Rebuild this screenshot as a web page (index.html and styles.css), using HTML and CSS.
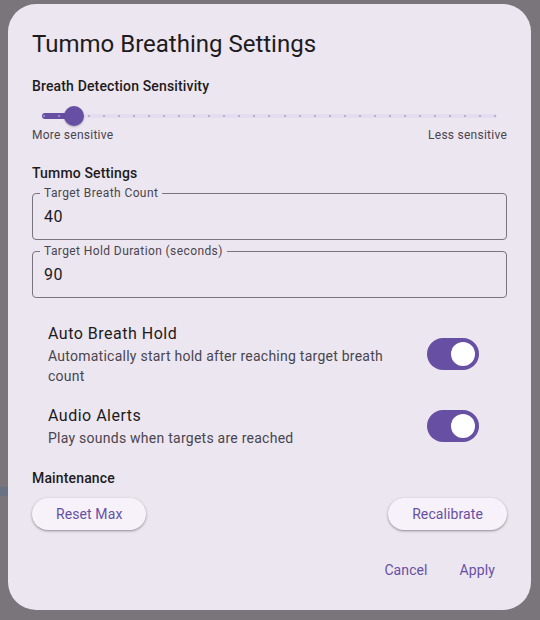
FILE: index.html
```html
<!DOCTYPE html>
<html lang="en">
<head>
<meta charset="utf-8">
<title>Tummo Breathing Settings</title>
<link rel="stylesheet" href="styles.css">
</head>
<body>
<div class="backdrop-text">t</div>
<div class="backdrop-bar"></div>
<div class="dialog">
  <h1 class="title">Tummo Breathing Settings</h1>

  <div class="section-heading">Breath Detection Sensitivity</div>
  <div class="slider">
    <div class="track-inactive"></div>
    <div class="track-active"></div>
    <div class="ticks">
      <span class="tick on"></span><span class="tick on"></span><span class="tick"></span><span class="tick"></span><span class="tick"></span><span class="tick"></span><span class="tick"></span><span class="tick"></span><span class="tick"></span><span class="tick"></span><span class="tick"></span><span class="tick"></span><span class="tick"></span><span class="tick"></span><span class="tick"></span><span class="tick"></span><span class="tick"></span><span class="tick"></span><span class="tick"></span><span class="tick"></span><span class="tick"></span><span class="tick"></span><span class="tick"></span><span class="tick"></span><span class="tick"></span><span class="tick"></span><span class="tick"></span><span class="tick"></span><span class="tick"></span><span class="tick"></span><span class="tick"></span>
    </div>
    <div class="thumb"></div>
  </div>
  <div class="slider-labels">
    <span>More sensitive</span>
    <span>Less sensitive</span>
  </div>

  <div class="section-heading tummo">Tummo Settings</div>
  <div class="field first">
    <span class="field-label">Target Breath Count</span>
    <span class="field-value">40</span>
  </div>
  <div class="field">
    <span class="field-label">Target Hold Duration (seconds)</span>
    <span class="field-value">90</span>
  </div>

  <div class="tile tile-one">
    <div class="tile-text">
      <div class="tile-title">Auto Breath Hold</div>
      <div class="tile-sub">Automatically start hold after reaching target breath count</div>
    </div>
    <div class="switch"><div class="switch-thumb"></div></div>
  </div>
  <div class="tile tile-two">
    <div class="tile-text">
      <div class="tile-title">Audio Alerts</div>
      <div class="tile-sub">Play sounds when targets are reached</div>
    </div>
    <div class="switch"><div class="switch-thumb"></div></div>
  </div>

  <div class="section-heading maint">Maintenance</div>
  <div class="maint-row">
    <button class="pill">Reset Max</button>
    <button class="pill">Recalibrate</button>
  </div>

  <div class="actions">
    <button class="text-btn">Cancel</button>
    <button class="text-btn">Apply</button>
  </div>
</div>
</body>
</html>
```

FILE: styles.css
```css
* { box-sizing: border-box; }

html, body {
  margin: 0;
  padding: 0;
}

body {
  width: 540px;
  height: 620px;
  overflow: hidden;
  background: #79757b;
  font-family: Roboto, "Noto Sans", sans-serif;
  position: relative;
  padding-top: 4px;
  padding-left: 8px;
}

.backdrop-text {
  position: absolute;
  left: -10px;
  top: 336px;
  font-size: 28px;
  line-height: 36px;
  color: #2f2d31;
}

.backdrop-bar {
  position: absolute;
  left: 0;
  top: 487px;
  width: 8px;
  height: 9px;
  background: #687282;
}

.dialog {
  position: relative;
  width: 523px;
  height: 606px;
  background: #ece6f0;
  border-radius: 28px;
  padding: 24px 24px 20px 24px;
  display: flex;
  flex-direction: column;
  color: #1d1b20;
}

.title {
  margin: 0;
  font-size: 24px;
  line-height: 32px;
  font-weight: 400;
  color: #1d1b20;
}

.section-heading {
  margin-top: 16px;
  font-size: 14px;
  line-height: 20px;
  font-weight: 500;
  letter-spacing: 0.15px;
  color: #1d1b20;
}

.slider {
  position: relative;
  height: 23px;
  margin: 8px 10px 0 10px;
}

.track-inactive {
  position: absolute;
  left: 0;
  right: 0;
  top: 9.5px;
  height: 4px;
  border-radius: 2px;
  background: #e5dcf2;
}

.track-active {
  position: absolute;
  left: 0;
  width: 34px;
  top: 8.5px;
  height: 6px;
  border-radius: 3px;
  background: #6750a4;
}

.ticks {
  position: absolute;
  left: 1px;
  right: 1px;
  top: 10.5px;
  height: 2px;
  display: flex;
  justify-content: space-between;
}

.tick {
  width: 2px;
  height: 2px;
  border-radius: 1px;
  background: #aba5b2;
}

.tick.on {
  background: #a898d0;
}

.thumb {
  position: absolute;
  left: 22px;
  top: 1.5px;
  width: 20px;
  height: 20px;
  border-radius: 50%;
  background: #6750a4;
  box-shadow: 0 1px 2px rgba(0, 0, 0, 0.25);
}

.slider-labels {
  display: flex;
  justify-content: space-between;
  font-size: 12px;
  line-height: 16px;
  color: #49454f;
  letter-spacing: 0.25px;
}

.section-heading.tummo {
  margin-top: 20px;
}

.field {
  position: relative;
  height: 47px;
  border: 1px solid #79747e;
  border-radius: 4px;
  margin-top: 11px;
  display: flex;
  align-items: center;
  padding-left: 11px;
}

.field.first {
  margin-top: 10px;
}

.field-label {
  position: absolute;
  left: 7px;
  top: -9px;
  padding: 0 4px;
  background: #ece6f0;
  font-size: 12px;
  line-height: 16px;
  color: #49454f;
  letter-spacing: 0.4px;
}

.field-value {
  font-size: 16px;
  line-height: 24px;
  color: #1d1b20;
  letter-spacing: 0.4px;
}

.tile {
  display: flex;
  align-items: center;
  padding: 8px 28px 8px 16px;
}

.tile-one {
  margin-top: 16px;
}

.tile-two {
  margin-top: 2px;
}

.tile-text {
  flex: 1;
  padding-right: 16px;
}

.tile-title {
  font-size: 16px;
  line-height: 24px;
  color: #1d1b20;
  letter-spacing: 0.5px;
}

.tile-sub {
  font-size: 14px;
  line-height: 20px;
  color: #49454f;
  letter-spacing: 0.25px;
}

.switch {
  position: relative;
  width: 52px;
  height: 32px;
  border-radius: 16px;
  background: #6750a4;
  flex: none;
}

.switch-thumb {
  position: absolute;
  right: 4px;
  top: 4px;
  width: 24px;
  height: 24px;
  border-radius: 50%;
  background: #ffffff;
}

.section-heading.maint {
  margin-top: 12px;
}

.maint-row {
  display: flex;
  justify-content: space-between;
  margin-top: 10px;
}

.pill {
  height: 32px;
  padding: 0 24px;
  border: none;
  border-radius: 16px;
  background: #f7f2fa;
  box-shadow: 0 1px 2px rgba(0, 0, 0, 0.3), 0 1px 3px 1px rgba(0, 0, 0, 0.08);
  font-family: Roboto, "Noto Sans", sans-serif;
  font-size: 14px;
  font-weight: 400;
  color: #6750a4;
  letter-spacing: 0.1px;
}

.actions {
  margin-top: auto;
  display: flex;
  justify-content: flex-end;
  gap: 8px;
}

.text-btn {
  height: 40px;
  padding: 0 12px;
  border: none;
  background: transparent;
  font-family: Roboto, "Noto Sans", sans-serif;
  font-size: 14px;
  font-weight: 400;
  color: #6750a4;
  letter-spacing: 0.1px;
}
```
